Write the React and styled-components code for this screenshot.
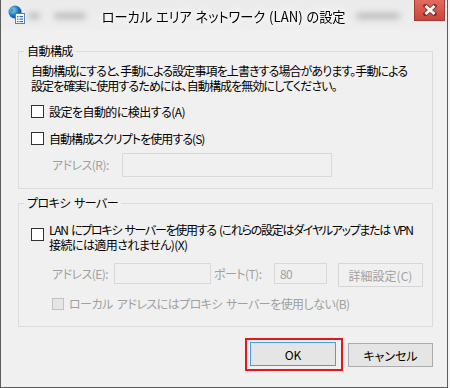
import React from "react";
import styled, { createGlobalStyle } from "styled-components";

const Global = createGlobalStyle`
  body {
    margin: 0;
    padding: 0;
    background: #f6f6f6;
    overflow: hidden;
  }
`;

const FONT = `"Noto Sans CJK JP", "Noto Sans", sans-serif`;

const Window = styled.div`
  box-sizing: border-box;
  width: 448px;
  height: 388px;
  background: #f0f0f0;
  border: 1px solid #5c5c5c;
  border-top: none;
  font-family: ${FONT};
  font-feature-settings: "palt";
  font-size: 12px;
  letter-spacing: -0.55px;
  white-space: nowrap;
  color: #000;
  display: flex;
  flex-direction: column;
`;

const TitleBar = styled.div`
  height: 30px;
  display: flex;
  align-items: flex-start;
  background: linear-gradient(#ebebeb, #eeeeee);
`;

const TitleSide = styled.div`
  flex: 1;
  height: 30px;
  display: flex;
  align-items: flex-start;
  justify-content: ${({ right }) => (right ? "flex-end" : "flex-start")};
`;

const Blur = styled.div`
  width: ${({ w }) => w}px;
  height: 6px;
  margin: 13px ${({ mr }) => mr || 0}px 0 ${({ ml }) => ml || 0}px;
  background: #b9b9b9;
  border-radius: 3px;
  filter: blur(3px);
`;

const Title = styled.div`
  flex: none;
  width: 246px;
  display: flex;
  justify-content: center;
  font-size: 14px;
  line-height: 33px;
  letter-spacing: 0;
  word-spacing: 1px;
  color: #000;
  text-shadow: 0 0 6px #ffffff, 0 0 10px #ffffff;

  span {
    display: inline-block;
    transform: scaleX(0.94);
  }
`;

const AppIcon = styled.svg`
  margin: 5px 0 0 7px;
  flex: none;
`;

const CloseButton = styled.div`
  width: 31px;
  height: 21px;
  margin-right: 2px;
  box-sizing: border-box;
  border: 1px solid #a33a30;
  border-top: none;
  background: linear-gradient(#e26a60, #c8453b);
  display: flex;
  align-items: center;
  justify-content: center;
`;

const Body = styled.div`
  flex: 1;
  display: flex;
  flex-direction: column;
  padding: 14px 14px 0 17px;
`;

const Group = styled.fieldset`
  margin: ${({ mt }) => mt || 0}px 0 0 0;
  padding: ${({ pt }) => pt}px 0 0 12px;
  height: ${({ h }) => h}px;
  box-sizing: border-box;
  border: 1px solid #dcdcdc;
  min-width: 0;
`;

const Legend = styled.legend`
  margin-left: -7px;
  padding: 0 3px;
  font-size: 12px;
  line-height: 14px;
  word-spacing: 2px;
`;

const Desc = styled.p`
  margin: 0;
  line-height: 15px;
  letter-spacing: -0.9px;
`;

const CheckRow = styled.label`
  display: flex;
  align-items: ${({ top }) => (top ? "flex-start" : "center")};
  margin: ${({ mt }) => mt || 0}px 0 0 ${({ ml }) => ml || 0}px;
  line-height: 15px;
  letter-spacing: ${({ ls }) => (ls ? `${ls}px` : "inherit")};
  word-spacing: 2px;
  color: ${({ disabled }) => (disabled ? "#a0a0a0" : "#000")};
`;

const Tail = styled.span`
  letter-spacing: -0.55px;
`;

const Box = styled.span`
  box-sizing: border-box;
  flex: none;
  width: ${({ size }) => size || 13}px;
  height: ${({ size }) => size || 13}px;
  margin: ${({ top }) => (top ? "6px" : "0")} 5px 0 0;
  border: 1px solid ${({ disabled }) => (disabled ? "#c2c2c2" : "#333")};
  background: ${({ disabled }) => (disabled ? "#e6e6e6" : "#fff")};
`;

const FieldRow = styled.div`
  display: flex;
  align-items: flex-start;
  margin: ${({ mt }) => mt || 0}px 0 0 ${({ ml }) => ml || 0}px;
`;

const FieldLabel = styled.span`
  color: #a0a0a0;
  width: ${({ w }) => w}px;
  flex: none;
  line-height: ${({ lh }) => lh || 21}px;
`;

const Input = styled.div`
  box-sizing: border-box;
  width: ${({ w }) => w}px;
  height: ${({ h }) => h}px;
  border: 1px solid #d9d9d9;
  background: #f0f0f0;
  color: #a0a0a0;
  padding-left: 5px;
  display: flex;
  align-items: center;
  margin-right: ${({ mr }) => mr || 0}px;
`;

const Button = styled.div`
  box-sizing: border-box;
  width: ${({ w }) => w}px;
  height: ${({ h }) => h || 24}px;
  display: flex;
  align-items: center;
  justify-content: center;
  border: 1px solid
    ${({ primary, disabled }) =>
      primary ? "#4d9be6" : disabled ? "#d6d6d6" : "#acacac"};
  background: ${({ disabled }) => (disabled ? "#f0f0f0" : "#e5e5e5")};
  color: ${({ disabled }) => (disabled ? "#a0a0a0" : "#000")};
  letter-spacing: 0;
`;

const Footer = styled.div`
  display: flex;
  justify-content: flex-end;
  align-items: center;
  gap: 5px;
  margin-top: 12px;
`;

const Focus = styled.div`
  box-sizing: border-box;
  padding: 2px 5px 3px 3px;
  border: 2px solid #e8161b;
  margin-top: -1px;
`;

export default function App() {
  return (
    <>
      <Global />
      <Window>
        <TitleBar>
          <TitleSide>
            <AppIcon width="18" height="20" viewBox="0 0 18 20">
              <defs>
                <radialGradient id="g" cx="0.35" cy="0.35" r="0.7">
                  <stop offset="0" stopColor="#8fd3ff" />
                  <stop offset="0.6" stopColor="#1b74c9" />
                  <stop offset="1" stopColor="#0c4c92" />
                </radialGradient>
              </defs>
              <circle cx="7" cy="7" r="6.5" fill="url(#g)" />
              <path d="M3 4 q2 -1 3 1 q-1 2 -3 2 z M8 9 q2 -1 3 1 l-2 2 z" fill="#4caf3a" />
              <rect x="7.5" y="8.5" width="9" height="10" fill="#fff" stroke="#5a7fa8" />
              <rect x="9" y="11" width="1.5" height="1.2" fill="#2e6db4" />
              <rect x="11.5" y="11" width="3.5" height="1.2" fill="#2e6db4" />
              <rect x="9" y="13.5" width="1.5" height="1.2" fill="#2e6db4" />
              <rect x="11.5" y="13.5" width="3.5" height="1.2" fill="#2e6db4" />
              <rect x="9" y="16" width="1.5" height="1.2" fill="#2e6db4" />
              <rect x="11.5" y="16" width="3.5" height="1.2" fill="#2e6db4" />
            </AppIcon>
            <Blur w={12} ml={2} />
            <Blur w={32} ml={14} />
          </TitleSide>
          <Title>
            <span>ローカル エリア ネットワーク (LAN) の設定</span>
          </Title>
          <TitleSide right>
            <Blur w={44} mr={14} />
            <CloseButton>
              <svg width="14" height="12" viewBox="0 0 14 12">
                <path d="M2.5 2 L11.5 10 M11.5 2 L2.5 10" stroke="#3a1512" strokeWidth="4.4" strokeLinecap="square" opacity="0.55" />
                <path d="M2.5 2 L11.5 10 M11.5 2 L2.5 10" stroke="#fff" strokeWidth="2.8" />
              </svg>
            </CloseButton>
          </TitleSide>
        </TitleBar>

        <Body>
          <Group h={145} pt={5}>
            <Legend>自動構成</Legend>
            <Desc>
              自動構成にすると、手動による設定事項を上書きする場合があります。手動による
              <br />
              設定を確実に使用するためには、自動構成を無効にしてください。
            </Desc>
            <CheckRow mt={11}>
              <Box />
              設定を自動的に検出する(A)
            </CheckRow>
            <CheckRow mt={12} ls={-0.95}>
              <Box />
              自動構成スクリプトを使用する(S)
            </CheckRow>
            <FieldRow mt={7} ml={21}>
              <FieldLabel w={70} lh={24}>アドレス(R):</FieldLabel>
              <Input w={210} h={24} />
            </FieldRow>
          </Group>

          <Group h={131} pt={12} mt={7}>
            <Legend>プロキシ サーバー</Legend>
            <CheckRow top ls={-1.3}>
              <Box top />
              <span>
                LAN にプロキシ サーバーを使用する (これらの設定はダイヤルアップまたは VPN
                <br />
                <Tail>接続には適用されません)(X)</Tail>
              </span>
            </CheckRow>
            <FieldRow mt={11} ml={21}>
              <FieldLabel w={62}>アドレス(E):</FieldLabel>
              <Input w={97} h={21} mr={3} />
              <FieldLabel w={60}>ポート(T):</FieldLabel>
              <Input w={53} h={21} mr={11}>80</Input>
              <Button w={85} disabled>詳細設定(C)</Button>
            </FieldRow>
            <CheckRow mt={9} ml={21} disabled>
              <Box size={12} disabled />
              ローカル アドレスにはプロキシ サーバーを使用しない(B)
            </CheckRow>
          </Group>

          <Footer>
            <Focus>
              <Button w={86} primary>OK</Button>
            </Focus>
            <Button w={85}>キャンセル</Button>
          </Footer>
        </Body>
      </Window>
    </>
  );
}
